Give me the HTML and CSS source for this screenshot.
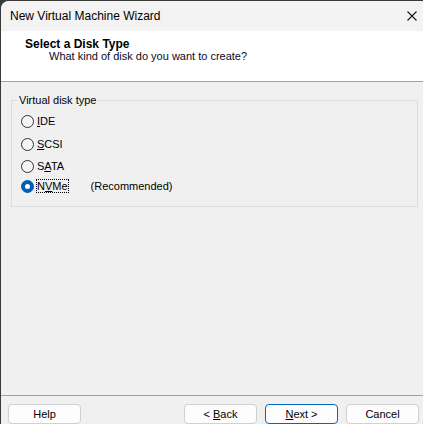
FILE: index.html
```html
<!DOCTYPE html>
<html>
<head>
<meta charset="utf-8">
<link rel="stylesheet" href="styles.css">
</head>
<body>
<div class="window">
  <div class="titlebar">
    <span class="title">New Virtual Machine Wizard</span>
    <svg class="close" width="10" height="10" viewBox="0 0 10 10"><path d="M0.5 0.5 L9.5 9.5 M9.5 0.5 L0.5 9.5" stroke="#1a1a1a" stroke-width="1.1" fill="none"/></svg>
  </div>
  <div class="header">
    <div class="h-title">Select a Disk Type</div>
    <div class="h-sub">What kind of disk do you want to create?</div>
  </div>
  <div class="content">
    <div class="group">
      <span class="legend">Virtual disk type</span>
      <div class="row"><span class="radio"></span><span class="label"><u>I</u>DE</span></div>
      <div class="row"><span class="radio"></span><span class="label"><u>S</u>CSI</span></div>
      <div class="row"><span class="radio"></span><span class="label">S<u>A</u>TA</span></div>
      <div class="row"><span class="radio checked"></span><span class="label focus">N<u>V</u>Me</span><span class="rec">(Recommended)</span></div>
    </div>
  </div>
  <div class="footer">
    <button class="btn">Help</button>
    <div class="spacer"></div>
    <button class="btn">&lt; <u>B</u>ack</button>
    <button class="btn default"><u>N</u>ext &gt;</button>
    <button class="btn">Cancel</button>
  </div>
</div>
</body>
</html>
```
FILE: styles.css
```css
html, body {
  margin: 0;
  padding: 0;
  background: #3a3a3a;
  width: 423px;
  height: 424px;
  overflow: hidden;
}
body {
  font-family: "Liberation Sans", Arial, sans-serif;
  font-size: 11px;
  color: #000;
}
.window {
  margin: 1px 0 0 1px;
  width: 422px;
  height: 423px;
  background: #f0f0f0;
  border-top-left-radius: 8px;
  display: flex;
  flex-direction: column;
  overflow: hidden;
}
.titlebar {
  height: 30px;
  display: flex;
  align-items: center;
  padding-left: 9px;
  padding-right: 6px;
  background: #f3f3f3;
}
.title {
  flex: 1;
  font-size: 12px;
  line-height: 14px;
}
.close {
  display: block;
}
.header {
  background: #fff;
  height: 51px;
  box-sizing: border-box;
  padding: 7px 0 0 24px;
  border-bottom: 1px solid #a0a0a0;
}
.h-title {
  font-weight: bold;
  font-size: 12px;
  line-height: 12px;
}
.h-sub {
  line-height: 12px;
  padding-left: 24px;
  color: #0a0a28;
}
.content {
  flex: 1;
  padding: 18px 5px 0 10px;
}
.group {
  position: relative;
  border: 1px solid #dcdcdc;
  padding: 8px 0 12px 9px;
}
.legend {
  position: absolute;
  left: 5px;
  top: -8px;
  padding: 0 2px;
  line-height: 14px;
  background: #f0f0f0;
}
.row {
  display: flex;
  align-items: center;
  height: 16px;
}
.row:nth-of-type(1) { margin-top: 4px; }
.row:nth-of-type(2) { margin-top: 7px; }
.row:nth-of-type(3) { margin-top: 6px; }
.row:nth-of-type(4) { margin-top: 4px; }
.radio {
  width: 13px;
  height: 13px;
  box-sizing: border-box;
  border: 1px solid #333;
  border-radius: 50%;
  background: #f5f5f5;
  flex: none;
  position: relative;
}
.radio.checked {
  background: #005fb8;
  border-color: #005fb8;
}
.radio.checked::after {
  content: "";
  position: absolute;
  left: 3px;
  top: 3px;
  width: 5px;
  height: 5px;
  border-radius: 50%;
  background: #fff;
}
.label {
  margin-left: 2px;
  border: 1px dotted transparent;
  line-height: 12px;
}
.label.focus {
  border-color: #000;
}
.rec {
  margin-left: 22px;
}
u {
  text-decoration: underline;
  text-underline-offset: 1px;
}
.footer {
  height: 29px;
  border-top: 1px solid #a0a0a0;
  display: flex;
  align-items: flex-start;
  padding: 8px 4px 0 7px;
  gap: 8px;
  box-sizing: border-box;
}
.spacer {
  flex: 1;
}
.btn {
  width: 73px;
  height: 20px;
  font: inherit;
  color: #000;
  background: #fdfdfd;
  border: 1px solid #d0d0d0;
  border-radius: 4px;
  padding: 0;
  line-height: 16px;
}
.btn.default {
  border-color: #0067c0;
}
```
